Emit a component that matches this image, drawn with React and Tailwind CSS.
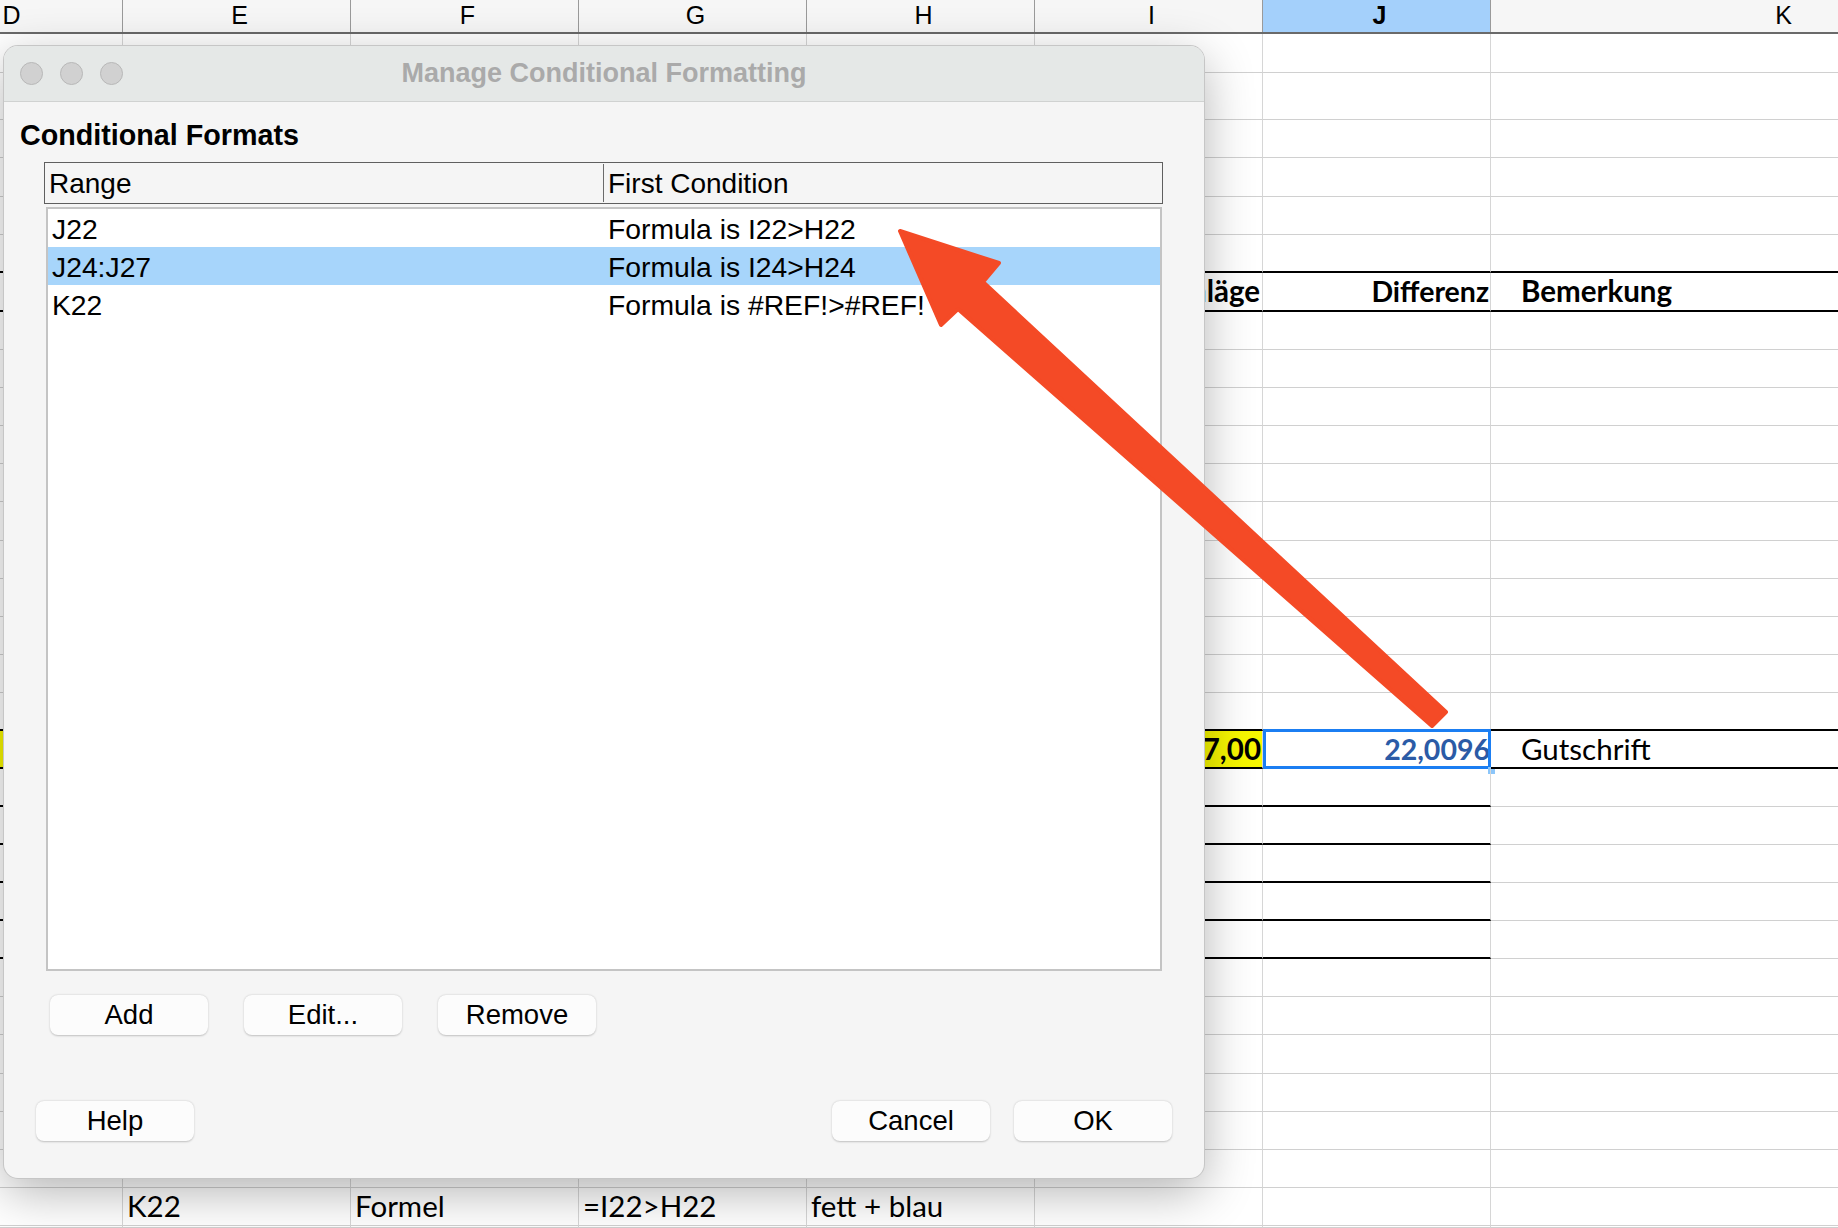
import React from 'react';

// spreadsheet grid lines (y of each row's bottom edge), measured off the screenshot
const LINES = [34, 73, 120, 158, 197, 235, 273, 312, 350, 388, 426, 464, 502, 541, 579, 617, 655, 693, 731, 769, 807, 845, 883, 921, 959, 997, 1035, 1074, 1112, 1150, 1188, 1226, 1228];

const COLS = [
  { key: 'D', w: 'w-[228px]' },
  { key: 'E', w: 'w-[228px]' },
  { key: 'F', w: 'w-[228px]' },
  { key: 'G', w: 'w-[228px]' },
  { key: 'H', w: 'w-[228px]' },
  { key: 'I', w: 'w-[228px]' },
  { key: 'J', w: 'w-[228px]' },
  { key: 'K', w: 'w-[580px]' },
];

const THICK_ALL = [5, 6, 17, 18];
const THICK_NO_K = [19, 20, 21, 22, 23];

const CELLS = {
  6: {
    I: <span className="ml-auto pr-[2px] font-bold">Anläge</span>,
    J: <span className="ml-auto pr-[1px] font-bold text-[28.5px]">Differenz</span>,
    K: <span className="pl-[30px] font-bold">Bemerkung</span>,
  },
  18: {
    K: <span className="pl-[30px]">Gutschrift</span>,
  },
  30: {
    E: <span className="pl-[4px]">K22</span>,
    F: <span className="pl-[4px]">Formel</span>,
    G: <span className="pl-[4px]">=I22&gt;H22</span>,
    H: <span className="pl-[4px]">fett + blau</span>,
  },
};

function Cell({ col, row, height }) {
  const thick = THICK_ALL.includes(row) || (THICK_NO_K.includes(row) && col.key !== 'K');
  const yellow = row === 18 && (col.key === 'D' || col.key === 'I');
  const selected = row === 18 && col.key === 'J';
  return (
    <div
      className={`${col.w} shrink-0 relative flex items-center border-r border-r-[#d6d6d6] ${
        thick ? 'border-b-2 border-b-black' : 'border-b border-b-[#d0d0d0]'
      } ${yellow ? 'bg-[#f7f700]' : ''}`}
      style={{ height }}
    >
      {row === 18 && col.key === 'I' && <span className="ml-auto pr-[1px] font-bold">4.567,00</span>}
      {selected && (
        <>
          <span className="ml-auto font-bold text-[#2b5ba6] text-[28.5px]">22,0096</span>
          <div className="absolute left-0 right-[-1px] top-[-2px] bottom-[-2px] border-[3px] border-[#1b7ef2]" />
          <div className="absolute right-[-5px] bottom-[-7px] w-[7px] h-[7px] bg-[#8cc6fa]" />
        </>
      )}
      {CELLS[row] && CELLS[row][col.key]}
    </div>
  );
}

function Sheet() {
  return (
    <div className="ml-[-105px] font-['Lato','Liberation_Sans',sans-serif] text-[29.5px] text-black">
      <div className="flex h-[34px] border-b-2 border-b-[#6a6a6a] bg-[#f6f6f6] font-['Liberation_Sans',Arial,sans-serif] text-[25px]">
        {COLS.map((c) => (
          <div
            key={c.key}
            className={`${c.w} shrink-0 flex items-center justify-center border-r border-r-[#9a9a9a] ${
              c.key === 'J' ? 'bg-[#a4d0fb] font-bold' : ''
            }`}
          >
            <span className="translate-x-[3px]">{c.key}</span>
          </div>
        ))}
      </div>
      {LINES.slice(0, -1).map((y, i) => (
        <div key={i} className="flex">
          {COLS.map((c) => (
            <Cell key={c.key} col={c} row={i} height={LINES[i + 1] - y} />
          ))}
        </div>
      ))}
    </div>
  );
}

function Button({ children, className = '' }) {
  return (
    <div
      className={`w-[158px] h-[40px] rounded-[8px] bg-[#fcfcfc] shadow-[0_0.5px_2px_rgba(0,0,0,0.22)] flex items-center justify-center text-[27.5px] text-black ${className}`}
    >
      {children}
    </div>
  );
}

const ROWS = [
  { range: 'J22', cond: 'Formula is I22>H22' },
  { range: 'J24:J27', cond: 'Formula is I24>H24', active: true },
  { range: 'K22', cond: 'Formula is #REF!>#REF!' },
];

function Dialog() {
  return (
    <div className="absolute left-[4px] top-[46px] w-[1200px] h-[1132px] rounded-[14px] bg-[#f5f5f5] ring-1 ring-[#c6c6c6] shadow-[0_14px_50px_rgba(0,0,0,0.3)] flex flex-col overflow-hidden font-['Liberation_Sans',Arial,sans-serif]">
      <div className="h-[56px] shrink-0 grid grid-cols-[1fr_auto_1fr] items-center px-[16px] bg-[#e5e8e7] border-b border-b-[#d0d2d1]">
        <div className="flex gap-[17px]">
          {[0, 1, 2].map((i) => (
            <div key={i} className="w-[23px] h-[23px] rounded-full bg-[#d1d1d1] border border-[#b8b8b8]" />
          ))}
        </div>
        <div className="text-[27px] font-bold text-[#aaaaaa]">Manage Conditional Formatting</div>
        <div />
      </div>

      <div className="flex-1 flex flex-col">
        <div className="pl-[16px] pt-[17px] text-[28.7px] leading-[32px] font-bold text-black">Conditional Formats</div>

        <div className="ml-[40px] mt-[11px] w-[1119px] h-[42px] shrink-0 border border-[#5f5f5f] flex items-center text-[28px] text-black">
          <div className="w-[558px] pl-[4px] pt-[2px]">Range</div>
          <div className="w-px h-[38px] bg-[#6b6b6b]" />
          <div className="pl-[4px] pt-[2px]">First Condition</div>
        </div>

        <div className="ml-[42px] mt-[3px] w-[1116px] h-[764px] shrink-0 border-2 border-[#c4c4c4] bg-white text-[28.3px] text-black">
          {ROWS.map((r) => (
            <div key={r.range} className={`h-[38px] flex items-center pt-[2px] ${r.active ? 'bg-[#a7d5fb]' : ''}`}>
              <div className="w-[556px] pl-[4px]">{r.range}</div>
              <div className="pl-[4px]">{r.cond}</div>
            </div>
          ))}
        </div>

        <div className="ml-[46px] mt-[24px] flex gap-[36px]">
          <Button>Add</Button>
          <Button>Edit...</Button>
          <Button>Remove</Button>
        </div>

        <div className="mt-[66px] px-[32px] flex justify-between">
          <Button>Help</Button>
          <div className="flex gap-[24px]">
            <Button>Cancel</Button>
            <Button>OK</Button>
          </div>
        </div>
      </div>
    </div>
  );
}

export default function App() {
  return (
    <div className="relative w-[1838px] h-[1228px] overflow-hidden bg-white">
      <Sheet />
      <Dialog />
      {/* annotation arrow */}
      <svg className="absolute inset-0 pointer-events-none" width="1838" height="1228" viewBox="0 0 1838 1228">
        <polygon
          points="900,231 999,263 983,282 1446,712 1432,726 958,309 941,325"
          fill="#f44a26"
          stroke="#f44a26"
          strokeWidth="4"
          strokeLinejoin="round"
        />
      </svg>
    </div>
  );
}
